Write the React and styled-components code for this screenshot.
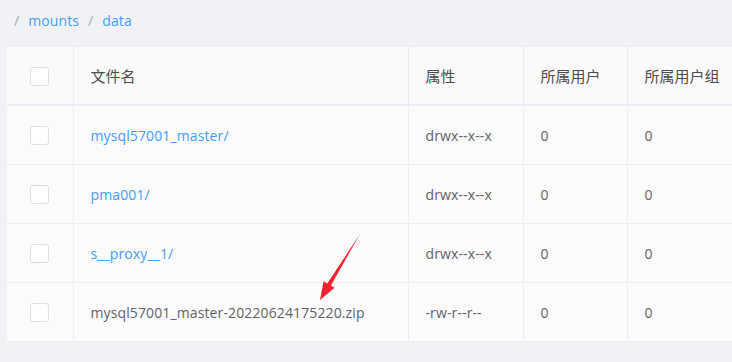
import React from "react"
import styled, { createGlobalStyle } from "styled-components"

const GlobalStyle = createGlobalStyle`
  html, body {
    margin: 0;
    padding: 0;
    background: #f0f2f5;
    font-family: "Open Sans", "Noto Sans CJK SC", sans-serif;
    overflow: hidden;
  }
`

const rows = [
  { name: "mysql57001_master/", dir: true, mode: "drwx--x--x", user: "0", group: "0" },
  { name: "pma001/", dir: true, mode: "drwx--x--x", user: "0", group: "0" },
  { name: "s__proxy__1/", dir: true, mode: "drwx--x--x", user: "0", group: "0" },
  { name: "mysql57001_master-20220624175220.zip", dir: false, mode: "-rw-r--r--", user: "0", group: "0" },
]

const App = () => {
  return (
    <Page>
      <GlobalStyle />
      <Crumbs>
        <Sep>/</Sep>
        <CrumbLink>mounts</CrumbLink>
        <Sep>/</Sep>
        <CrumbLink>data</CrumbLink>
      </Crumbs>
      <Card>
        <Table>
          <colgroup>
            <col style={{ width: 66 }} />
            <col style={{ width: 335 }} />
            <col style={{ width: 115 }} />
            <col style={{ width: 104 }} />
            <col />
          </colgroup>
          <thead>
            <tr>
              <Th center><Check /></Th>
              <Th>文件名</Th>
              <Th>属性</Th>
              <Th>所属用户</Th>
              <Th>所属用户组</Th>
            </tr>
          </thead>
          <tbody>
            {rows.map((r) => (
              <tr key={r.name}>
                <Td center><Check /></Td>
                <Td>{r.dir ? <FileLink>{r.name}</FileLink> : r.name}</Td>
                <Td>{r.mode}</Td>
                <Td>{r.user}</Td>
                <Td>{r.group}</Td>
              </tr>
            ))}
          </tbody>
        </Table>
      </Card>
      <Arrow width="732" height="362" viewBox="0 0 732 362">
        <polygon
          points="360,234 330.9,285.5 334.6,287.7 320,300 323.6,281.3 327.3,283.5"
          fill="#f5222d"
        />
      </Arrow>
    </Page>
  )
}

export default App

const Page = styled.div`
  position: relative;
  width: 732px;
  height: 362px;
  padding-left: 7px;
  box-sizing: border-box;
  overflow: hidden;
`

const Crumbs = styled.div`
  height: 46px;
  display: flex;
  align-items: center;
  padding-left: 7px;
  padding-bottom: 6px;
  box-sizing: border-box;
  font-size: 14px;
  letter-spacing: 0.1px;
`

const Sep = styled.span`
  color: #a8abb2;
  margin: 0 9px 0 0;
  &:not(:first-child) {
    margin-left: 9px;
  }
`

const CrumbLink = styled.span`
  color: #409eff;
`

const Card = styled.div`
  width: 800px;
  background: #fafafa;
  border-top: 1px solid #ebeef5;
`

const Table = styled.table`
  width: 100%;
  border-collapse: collapse;
  table-layout: fixed;
  font-size: 14px;
  letter-spacing: 0.12px;
  color: #606266;
`

const Th = styled.th`
  height: 57px;
  padding: 0 17px;
  text-align: ${(p) => (p.center ? "center" : "left")};
  font-weight: normal;
  font-size: 15px;
  letter-spacing: 0;
  color: #4a4a4a;
  border-right: 1px solid #ebeef5;
  border-bottom: 2px solid #ebeef5;
  background: #fafafa;
`

const Td = styled.td`
  height: 58px;
  padding: 0 17px;
  text-align: ${(p) => (p.center ? "center" : "left")};
  border-right: 1px solid #ebeef5;
  border-bottom: 1px solid #ebeef5;
  background: #fbfbfb;
  white-space: nowrap;
`

const Check = styled.span`
  display: inline-block;
  vertical-align: middle;
  width: 17px;
  height: 17px;
  background: #fff;
  border: 1px solid #dcdfe6;
  border-radius: 3px;
`

const FileLink = styled.span`
  color: #409eff;
`

const Arrow = styled.svg`
  position: absolute;
  left: 0;
  top: 0;
  pointer-events: none;
`
